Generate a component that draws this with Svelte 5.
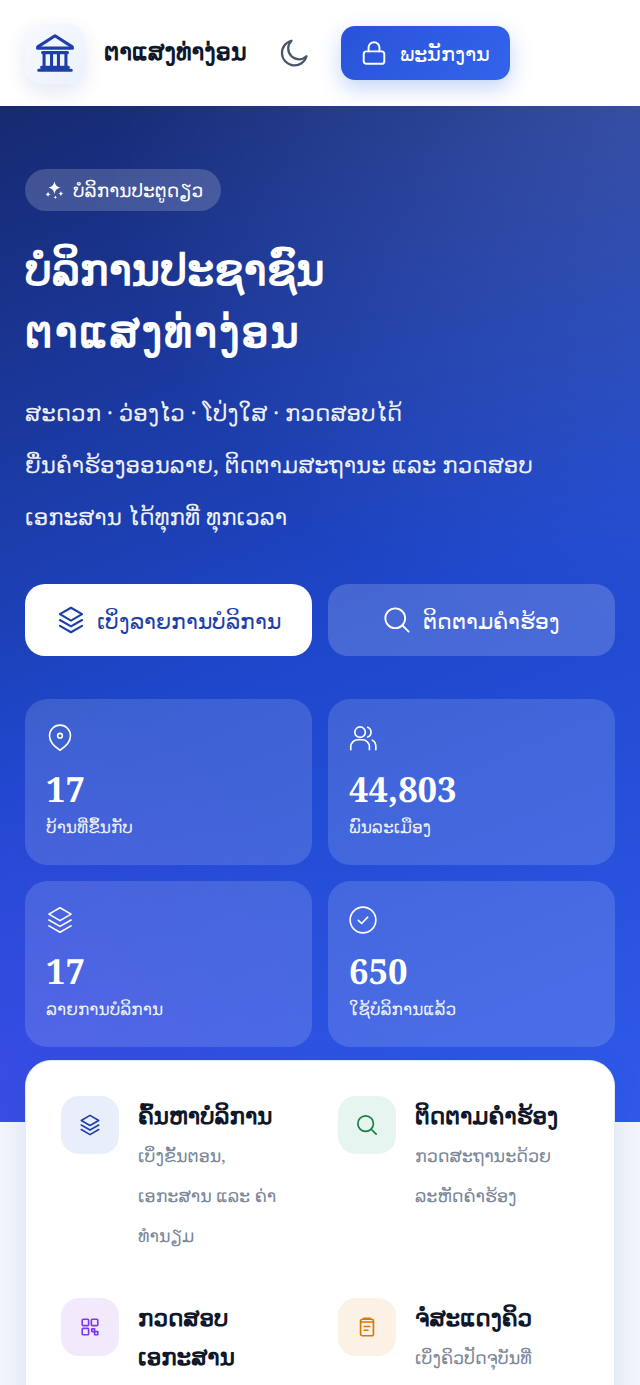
<script>
  const stats = [
    { icon: 'pin', value: '17', label: 'ບ້ານທີ່ຂຶ້ນກັບ' },
    { icon: 'users', value: '44,803', label: 'ພົນລະເມືອງ' },
    { icon: 'layers', value: '17', label: 'ລາຍການບໍລິການ' },
    { icon: 'check', value: '650', label: 'ໃຊ້ບໍລິການແລ້ວ' }
  ]

  const features = [
    { icon: 'layers', tone: 'blue', title: 'ຄົ້ນຫາບໍລິການ', text: 'ເບິ່ງຂັ້ນຕອນ, ເອກະສານ ແລະ ຄ່າທຳນຽມ' },
    { icon: 'search', tone: 'green', title: 'ຕິດຕາມຄຳຮ້ອງ', text: 'ກວດສະຖານະດ້ວຍ ລະຫັດຄຳຮ້ອງ' },
    { icon: 'qr', tone: 'purple', title: 'ກວດສອບ ເອກະສານ', text: 'ຢືນຢັນເອກະສານ ດ້ວຍ QR' },
    { icon: 'clip', tone: 'orange', title: 'ຈໍສະແດງຄິວ', text: 'ເບິ່ງຄິວປັດຈຸບັນທີ່ ຫ້ອງການ' }
  ]
</script>

{#snippet icon(name, size = 24, width = 1.6)}
  <svg viewBox="0 0 24 24" width={size} height={size} fill="none" stroke="currentColor" stroke-width={width} stroke-linecap="round" stroke-linejoin="round">
    {#if name === 'layers'}
      <path d="M12 1.500 2.500 7 12 12.500 21.500 7 12 1.500Z" />
      <path d="M2.500 12 12 17.500 21.500 12" />
      <path d="M2.500 17 12 22.500 21.500 17" />
    {:else if name === 'search'}
      <circle cx="10.500" cy="10.500" r="8.500" />
      <path d="m22 22-5.400-5.400" />
    {:else if name === 'pin'}
      <path d="M21 10c0 6-6 10.500-9 12.500C9 20.500 3 16 3 10a9 9 0 0 1 18 0Z" />
      <circle cx="12" cy="10" r="2" />
    {:else if name === 'users'}
      <circle cx="9.500" cy="7" r="4.500" />
      <path d="M1.500 22v-2.500a6 6 0 0 1 6-6h4a6 6 0 0 1 6 6v2.500" />
      <path d="M16 2.800a4.500 4.500 0 0 1 0 8.400" />
      <path d="M20 13.800a6 6 0 0 1 3 5.200V22" />
    {:else if name === 'check'}
      <circle cx="12" cy="12" r="11" />
      <path d="m8 12.300 2.800 2.700L16 9.500" />
    {:else if name === 'qr'}
      <rect x="3.500" y="3.500" width="7" height="7" rx="1" />
      <rect x="13.500" y="3.500" width="7" height="7" rx="1" />
      <rect x="3.500" y="13.500" width="7" height="7" rx="1" />
      <path d="M14 14h3v3h3.500v3.500H17V17h-3Z" />
    {:else if name === 'clip'}
      <rect x="5" y="3.500" width="14" height="18" rx="2" />
      <path d="M8.500 3.500V2.500h7v1" />
      <path d="M5 6.500h14M9 11.500h6M9 15.500h4" />
    {/if}
  </svg>
{/snippet}

<header class="topbar">
  <div class="logo">
    <svg viewBox="0 0 24 24" width="46" height="46" fill="none" stroke="currentColor" stroke-width="1.600" stroke-linecap="round" stroke-linejoin="round">
      <path d="M3 8.800 12 3l9 5.800" />
      <path d="M3 9.500h18" stroke-width="1.700" />
      <path d="M5.500 11.800h13M6.300 11.800v7.200M10.200 11.800v7.200M13.800 11.800v7.200M17.700 11.800v7.200M5 19.400h14M3.500 21h17" />
    </svg>
  </div>
  <span class="brand">ຕາແສງທ່າງ່ອນ</span>
  <svg class="moon" viewBox="0 0 24 24" width="30" height="30" fill="none" stroke="currentColor" stroke-width="1.800" stroke-linecap="round" stroke-linejoin="round">
    <path d="M10 2.200a10 10 0 1 0 12 12.400A8.200 8.200 0 0 1 10 2.200Z" />
  </svg>
  <button class="login">
    <svg viewBox="0 0 24 24" width="26" height="26" fill="none" stroke="currentColor" stroke-width="1.800" stroke-linecap="round" stroke-linejoin="round">
      <rect x="2.500" y="10.500" width="19" height="11.500" rx="2.500" />
      <path d="M7 10.500V7a5 5 0 0 1 10 0v3.500" />
    </svg>
    ພະນັກງານ
  </button>
</header>

<section class="hero">
  <div class="pill">
    <svg viewBox="0 0 24 24" width="22" height="22" fill="currentColor">
      <path d="M12.500 2.500c.8 4.300 2.500 6 6.500 7-4 .9-5.700 2.700-6.500 7-.8-4.300-2.500-6.100-6.500-7 4-1 5.700-2.700 6.500-7Z" />
      <path d="M19.500 13c.4 1.700 1.100 2.500 2.800 2.900-1.700.4-2.400 1.200-2.800 2.900-.4-1.700-1.100-2.500-2.800-2.900 1.700-.4 2.400-1.200 2.800-2.900ZM5.500 13.500c.4 1.900 1.200 2.700 3 3.100-1.800.4-2.600 1.200-3 3.100-.4-1.900-1.200-2.700-3-3.100 1.800-.4 2.600-1.200 3-3.100ZM13.500 18c.3 1.200.8 1.700 2 2-1.200.3-1.700.8-2 2-.3-1.200-.8-1.700-2-2 1.200-.3 1.700-.8 2-2Z" />
    </svg>
    ບໍລິການປະຕູດຽວ
  </div>
  <h1>ບໍລິການປະຊາຊົນ<br /><span class="place">ຕາແສງທ່າງ່ອນ</span></h1>
  <p class="lead">ສະດວກ · ວ່ອງໄວ · ໂປ່ງໃສ · ກວດສອບໄດ້<br />ຍື່ນຄຳຮ້ອງອອນລາຍ, ຕິດຕາມສະຖານະ ແລະ ກວດສອບ<br />ເອກະສານ ໄດ້ທຸກທີ່ ທຸກເວລາ</p>
  <div class="actions">
    <button class="action primary">{@render icon('layers', 28, 1.800)}ເບິ່ງລາຍການບໍລິການ</button>
    <button class="action ghost">{@render icon('search', 28)}ຕິດຕາມຄຳຮ້ອງ</button>
  </div>
  <div class="stats">
    {#each stats as s}
      <div class="stat">
        {@render icon(s.icon, 28, 1.400)}
        <strong>{s.value}</strong>
        <span>{s.label}</span>
      </div>
    {/each}
  </div>
</section>

<main class="page">
  <div class="card">
    {#each features as f}
      <div class="feature">
        <div class="badge {f.tone}">{@render icon(f.icon, 22, 1.800)}</div>
        <div class="copy">
          <h3>{f.title}</h3>
          <p>{f.text}</p>
        </div>
      </div>
    {/each}
  </div>
</main>

<style>
  :global(body) {
    background: #f1f5fd;
    font-family: 'Noto Serif', 'Liberation Serif', serif;
    text-rendering: geometricPrecision;
  }

  button {
    font: inherit;
    border: none;
  }

  .topbar {
    height: 106px;
    box-sizing: border-box;
    background: #fff;
    display: flex;
    align-items: center;
    padding: 0 25px;
  }

  .logo {
    width: 60px;
    height: 61px;
    border-radius: 18px;
    background: linear-gradient(135deg, #f8faff, #eaf0fd);
    box-shadow: 0 8px 20px rgba(30, 58, 138, 0.12);
    color: #1e3fa8;
    display: flex;
    align-items: center;
    justify-content: center;
    flex-shrink: 0;
  }

  .brand {
    width: 142px;
    font-size: 23.800px;
    font-weight: 700;
    white-space: nowrap;
    color: #0f172a;
    margin-left: 19px;
    margin-bottom: 4px;
  }

  .moon {
    color: #475569;
    margin-left: 33px;
    flex-shrink: 0;
  }

  .login {
    margin-left: 32px;
    height: 54px;
    width: 169px;
    flex-shrink: 0;
    border-radius: 14px;
    background: linear-gradient(135deg, #2853d8, #3464ec);
    color: #fff;
    font-size: 20.500px;
    display: flex;
    align-items: center;
    justify-content: center;
    gap: 13px;
    box-shadow: 0 8px 22px rgba(37, 99, 235, 0.28);
  }

  .hero {
    box-sizing: border-box;
    padding: 63px 25px 75.500px;
    color: #fff;
    background:
      radial-gradient(circle at 100% 0%, rgba(255, 255, 255, 0.12), transparent 45%),
      radial-gradient(circle at 0% 100%, rgba(80, 70, 240, 0.45), transparent 35%),
      linear-gradient(157deg, #172a70 0%, #1e47cc 52%, #2f5aea 100%);
  }

  .pill {
    display: flex;
    width: fit-content;
    align-items: center;
    gap: 8px;
    height: 42px;
    box-sizing: border-box;
    padding: 0 18px;
    border-radius: 21px;
    background: rgba(255, 255, 255, 0.18);
    font-size: 18.600px;
  }

  h1 {
    margin: 27px 0 0;
    font-size: 43px;
    line-height: 62px;
    font-weight: 700;
  }

  .place {
    letter-spacing: 1.800px;
  }

  .lead {
    margin: 24px 0 0;
    font-size: 23px;
    line-height: 52px;
    opacity: 0.92;
  }

  .actions,
  .stats {
    display: grid;
    grid-template-columns: 1fr 1fr;
    gap: 16px;
  }

  .actions {
    margin-top: 42px;
  }

  .action {
    height: 72px;
    border-radius: 20px;
    font-size: 22px;
    display: flex;
    align-items: center;
    justify-content: center;
    gap: 12px;
  }

  .primary {
    background: #fff;
    color: #1e3fa8;
  }

  .ghost {
    background: rgba(255, 255, 255, 0.18);
    color: #fff;
  }

  .stats {
    margin-top: 43px;
    gap: 16.500px 16px;
  }

  .stat {
    height: 165.500px;
    box-sizing: border-box;
    padding: 25px 21px;
    border-radius: 22px;
    background: rgba(255, 255, 255, 0.14);
    display: flex;
    flex-direction: column;
    align-items: flex-start;
  }

  .stat strong {
    margin-top: 16px;
    font-size: 34.500px;
    line-height: 44px;
  }

  .stat span {
    margin-top: 3px;
    font-size: 17px;
    line-height: 24px;
    opacity: 0.9;
  }

  .page {
    padding: 0 25px 40px;
    margin-top: -62px;
    position: relative;
  }

  .card {
    background: #fff;
    border-radius: 26px;
    border: 1px solid #e2e9f7;
    box-shadow: 0 10px 30px rgba(30, 58, 138, 0.1);
    padding: 35px;
    display: grid;
    grid-template-columns: 1fr 1fr;
    gap: 42px 36px;
  }

  .feature {
    display: flex;
    gap: 19px;
    align-items: flex-start;
    min-width: 0;
  }

  .copy {
    min-width: 0;
  }

  .badge {
    width: 58px;
    height: 58px;
    border-radius: 18px;
    flex-shrink: 0;
    display: flex;
    align-items: center;
    justify-content: center;
  }

  .blue {
    background: #e9eefb;
    color: #1e3fa8;
  }

  .green {
    background: #e6f5ef;
    color: #15803d;
  }

  .purple {
    background: #f2eafc;
    color: #7c3aed;
  }

  .orange {
    background: #fcf1e5;
    color: #d97706;
  }

  h3 {
    margin: 0;
    font-size: 23px;
    line-height: 38.500px;
    color: #0f172a;
  }

  .feature p {
    margin: 1px 0 0;
    font-size: 17.500px;
    line-height: 40.300px;
    color: #7b8798;
  }
</style>
